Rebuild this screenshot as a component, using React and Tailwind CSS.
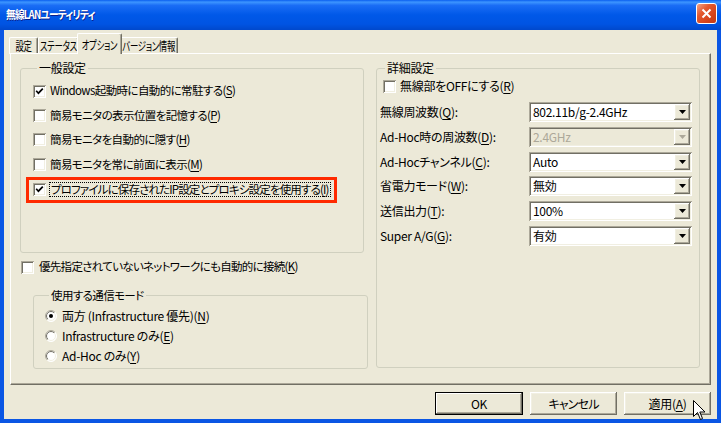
import React from "react";

const sunken =
  "shadow-[inset_1px_1px_0_#ACA899,inset_-1px_-1px_0_#FFFFFF,inset_2px_2px_0_#716F64,inset_-2px_-2px_0_#F1EFE2]";
const raised =
  "shadow-[inset_-1px_-1px_0_#716F64,inset_1px_1px_0_#FFFFFF,inset_-2px_-2px_0_#ACA899,inset_2px_2px_0_#F1EFE2]";

function U({ c }) {
  return <span className="underline underline-offset-2">{c}</span>;
}

function Check({ checked }) {
  return (
    <span className={`w-[13px] h-[13px] shrink-0 bg-white flex items-center justify-center ${sunken}`}>
      {checked && (
        <svg width="9" height="9" viewBox="0 0 9 9">
          <path d="M1.2 3.8 L3.4 6.2 L7.8 1.6" stroke="#000" strokeWidth="1.7" fill="none" />
        </svg>
      )}
    </span>
  );
}

function Radio({ on }) {
  return (
    <svg width="12" height="12" viewBox="0 0 12 12" className="shrink-0">
      <defs>
        <linearGradient id="ro" x1="0" y1="0" x2="1" y2="1">
          <stop offset="0" stopColor="#ACA899" />
          <stop offset="0.5" stopColor="#ACA899" />
          <stop offset="0.5" stopColor="#FFFFFF" />
          <stop offset="1" stopColor="#FFFFFF" />
        </linearGradient>
        <linearGradient id="ri" x1="0" y1="0" x2="1" y2="1">
          <stop offset="0" stopColor="#716F64" />
          <stop offset="0.5" stopColor="#716F64" />
          <stop offset="0.5" stopColor="#F1EFE2" />
          <stop offset="1" stopColor="#F1EFE2" />
        </linearGradient>
      </defs>
      <circle cx="6" cy="6" r="5.5" fill="#fff" stroke="url(#ro)" strokeWidth="1" />
      <circle cx="6" cy="6" r="4.5" fill="#fff" stroke="url(#ri)" strokeWidth="1" />
      {on && <circle cx="6" cy="6" r="2" fill="#000" />}
    </svg>
  );
}

function Combo({ value, disabled }) {
  return (
    <div className={`h-[20px] w-[163px] flex items-center ${disabled ? "bg-[#ECE9D8]" : "bg-white"} ${sunken}`}>
      <span className={`flex-1 pl-[4px] leading-none ${disabled ? "text-[#ACA899]" : "text-black"}`}>{value}</span>
      <span className={`w-[16px] h-[16px] mr-[2px] bg-[#ECE9D8] flex items-center justify-center ${raised}`}>
        <svg width="7" height="4" viewBox="0 0 7 4">
          <path d="M0 0H7L3.5 4Z" fill={disabled ? "#ACA899" : "#000"} />
        </svg>
      </span>
    </div>
  );
}

function Tab({ label, w, selected }) {
  if (selected) {
    return (
      <div
        className={`${w} h-[21px] -mx-[2px] relative z-10 bg-[#ECE9D8] border-t border-l border-white border-r border-r-[#716F64] rounded-t-[2px] flex items-start justify-center pt-[2px] shadow-[inset_-1px_0_0_#ACA899] whitespace-nowrap`}
      >
        <span className="inline-block scale-x-[0.7] tracking-[-0.4px]">{label}</span>
      </div>
    );
  }
  return (
    <div
      className={`${w} h-[17px] bg-[#ECE9D8] border-t border-l border-white border-r border-r-[#716F64] rounded-t-[2px] flex items-center justify-center shadow-[inset_-1px_0_0_#ACA899] whitespace-nowrap`}
    >
      <span className="inline-block scale-x-[0.7] tracking-[-0.4px]">{label}</span>
    </div>
  );
}

function Btn({ children, w, def }) {
  return (
    <div
      className={`${w} h-[23px] flex items-center justify-center bg-[#ECE9D8] ${
        def
          ? "border border-black shadow-[inset_-1px_-1px_0_#716F64,inset_1px_1px_0_#FFFFFF,inset_-2px_-2px_0_#ACA899]"
          : raised
      }`}
    >
      {children}
    </div>
  );
}

function Row({ checked, children, h = "h-[24.4px]" }) {
  return (
    <div className={`${h} flex items-center gap-[4px]`}>
      <Check checked={checked} />
      <span className="leading-none whitespace-nowrap text-[11.5px] tracking-[-0.6px]">{children}</span>
    </div>
  );
}

export default function App() {
  return (
    <div className="w-[721px] h-[423px] flex flex-col bg-[#0A56E4] overflow-hidden relative text-[12px] text-black font-['Noto_Sans_CJK_JP',sans-serif] [font-feature-settings:'palt'] tracking-[-0.3px]">
      {/* Title bar */}
      <div className="h-[30px] shrink-0 flex items-center justify-between pl-[6px] pr-[4px] bg-[linear-gradient(180deg,#0A5FEF_0%,#3D95FF_7%,#1A6DF5_18%,#0058E8_50%,#0054E3_80%,#0048CC_100%)]">
        <span className="inline-block origin-left scale-x-[0.85] text-white font-bold text-[11.5px] tracking-[-1px] [text-shadow:1px_1px_0_#0A1E8A]">
          無線LANユーティリティ
        </span>
        <div className="w-[21px] h-[21px] mb-[3px] rounded-[3px] border border-white bg-[linear-gradient(135deg,#F2A488_0%,#E4592F_35%,#D6431A_70%,#C23A14_100%)] flex items-center justify-center">
          <svg width="11" height="11" viewBox="0 0 11 11">
            <path d="M1.5 1.5 L9.5 9.5 M9.5 1.5 L1.5 9.5" stroke="#fff" strokeWidth="2" />
          </svg>
        </div>
      </div>

      {/* Client */}
      <div className="flex-1 mx-[4px] mb-[4px] bg-[#ECE9D8] flex flex-col">
        {/* Tabs */}
        <div className="h-[24px] flex items-end pl-[5px] -mb-[1px]">
          <Tab label="設定" w="w-[29px]" />
          <Tab label="ステータス" w="w-[41px]" />
          <Tab label="オプション" w="w-[45px]" selected />
          <Tab label="バージョン情報" w="w-[58px]" />
        </div>

        {/* Panel */}
        <div className="ml-[6px] w-[701px] h-[332px] border-t border-l border-white border-r border-b border-r-[#716F64] border-b-[#716F64] shadow-[inset_-1px_-1px_0_#ACA899] flex">
          {/* Left column */}
          <div className="w-[357px] flex flex-col pt-[7px]">
            <fieldset className="ml-[9px] w-[344px] h-[192px] border border-[#D0D0BF] rounded-[3px] px-[12px]">
              <legend className="ml-[4px] px-[2px] h-[14px] leading-[14px]">一般設定</legend>
              <div className="pt-[4px] flex flex-col">
                <Row checked>
                  Windows起動時に自動的に常駐する(<U c="S" />)
                </Row>
                <Row>
                  簡易モニタの表示位置を記憶する(<U c="P" />)
                </Row>
                <Row>
                  簡易モニタを自動的に隠す(<U c="H" />)
                </Row>
                <Row>
                  簡易モニタを常に前面に表示(<U c="M" />)
                </Row>
                <div className="h-[26px] -ml-[7px] w-[311px] border-[3px] border-[#FF2A00] flex items-center gap-[3px] pl-[4px]">
                  <Check checked />
                  <span className="leading-none whitespace-nowrap border border-dotted border-black px-[1px] py-[1px] text-[11.5px] tracking-[-0.85px]">
                    プロファイルに保存されたIP設定とプロキシ設定を使用する(<U c="I" />)
                  </span>
                </div>
              </div>
            </fieldset>

            <div className="mt-[7px] ml-[10px] h-[14px] flex items-center gap-[5px]">
              <Check />
              <span className="leading-none whitespace-nowrap text-[11.5px] tracking-[-0.7px]">
                優先指定されていないネットワークにも自動的に接続(<U c="K" />)
              </span>
            </div>

            <fieldset className="mt-[14px] ml-[22px] w-[335px] h-[81px] border border-[#D0D0BF] rounded-[3px] px-[11px]">
              <legend className="ml-[4px] px-[2px] h-[14px] leading-[14px] text-[11.5px] tracking-[-0.6px]">使用する通信モード</legend>
              <div className="pt-[4px] flex flex-col">
                <div className="h-[20px] flex items-center gap-[5px]">
                  <Radio on />
                  <span className="leading-none">
                    両方 (Infrastructure 優先)(<U c="N" />)
                  </span>
                </div>
                <div className="h-[20px] flex items-center gap-[5px]">
                  <Radio />
                  <span className="leading-none">
                    Infrastructure のみ(<U c="E" />)
                  </span>
                </div>
                <div className="h-[20px] flex items-center gap-[5px]">
                  <Radio />
                  <span className="leading-none">
                    Ad-Hoc のみ(<U c="Y" />)
                  </span>
                </div>
              </div>
            </fieldset>
          </div>

          {/* Right column */}
          <div className="ml-[8px] pt-[7px]">
            <fieldset className="w-[324px] h-[307px] border border-[#D0D0BF] rounded-[3px] pl-[3px]">
              <legend className="ml-[5px] px-[2px] h-[14px] leading-[14px]">詳細設定</legend>
              <div className="h-[22px] flex items-center gap-[4px] pl-[3px]">
                <Check />
                <span className="leading-none">
                  無線部をOFFにする(<U c="R" />)
                </span>
              </div>
              <div className="mt-[5px] flex flex-col gap-[4.8px]">
                {[
                  ["無線周波数(", "Q", "):", "802.11b/g-2.4GHz", false],
                  ["Ad-Hoc時の周波数(", "D", "):", "2.4GHz", true],
                  ["Ad-Hocチャンネル(", "C", "):", "Auto", false],
                  ["省電力モード(", "W", "):", "無効", false],
                  ["送信出力(", "T", "):", "100%", false],
                  ["Super A/G(", "G", "):", "有効", false],
                ].map(([a, k, b, v, d]) => (
                  <div key={k} className="h-[20px] flex items-center">
                    <span className="w-[149px] leading-none whitespace-nowrap">
                      {a}
                      <U c={k} />
                      {b}
                    </span>
                    <Combo value={v} disabled={d} />
                  </div>
                ))}
              </div>
            </fieldset>
          </div>
        </div>

        {/* Buttons */}
        <div className="mt-[7px] flex justify-end gap-[7px] pr-[6px]">
          <Btn w="w-[88px]" def>
            OK
          </Btn>
          <Btn w="w-[87px]">
            <span className="tracking-[-0.8px]">キャンセル</span>
          </Btn>
          <Btn w="w-[87px]">
            適用(<U c="A" />)
          </Btn>
        </div>
      </div>

      {/* Mouse cursor */}
      <svg className="absolute left-[693px] top-[400px]" width="13" height="21" viewBox="0 0 13 21">
        <path
          d="M0.5 0.5 L0.5 16.5 L4.5 12.5 L7.5 19.5 L9.5 18.5 L6.8 12 L12 12 Z"
          fill="#fff"
          stroke="#000"
          strokeWidth="1"
          strokeLinejoin="miter"
        />
      </svg>
    </div>
  );
}
